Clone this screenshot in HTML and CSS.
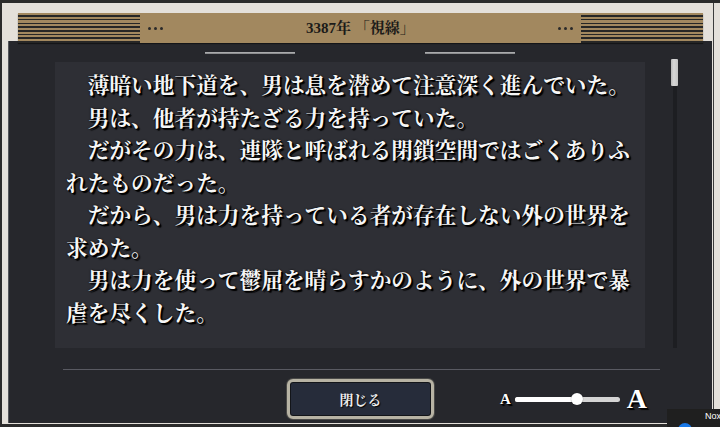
FILE: index.html
```html
<!DOCTYPE html>
<html lang="ja">
<head>
<meta charset="utf-8">
<title>3387年 「視線」</title>
<link rel="stylesheet" href="styles.css">
</head>
<body>
<div class="screen">
  <div class="frame">
    <header class="title-bar">
      <div class="stripes"></div>
      <span class="dots"><i></i><i></i><i></i></span>
      <h1 class="title">3387年 「視線」</h1>
      <span class="dots"><i></i><i></i><i></i></span>
      <div class="stripes"></div>
    </header>
    <main class="panel">
      <div class="tabs"><span class="tab-line"></span><span class="tab-line"></span></div>
      <div class="body-row">
        <article class="story">
          <p>薄暗い地下道を、男は息を潜めて注意深く進んでいた。</p>
          <p>男は、他者が持たざる力を持っていた。</p>
          <p>だがその力は、連隊と呼ばれる閉鎖空間ではごくありふれたものだった。</p>
          <p>だから、男は力を持っている者が存在しない外の世界を求めた。</p>
          <p>男は力を使って鬱屈を晴らすかのように、外の世界で暴虐を尽くした。</p>
        </article>
        <div class="scrollbar"><div class="thumb"></div><div class="track"></div></div>
      </div>
      <div class="divider"></div>
      <footer class="controls">
        <button class="close" type="button">閉じる</button>
        <div class="font-size">
          <span class="a-small">A</span>
          <div class="slider"><div class="fill"></div><div class="knob"></div></div>
          <span class="a-large">A</span>
        </div>
      </footer>
    </main>
  </div>
  <div class="edge"></div>
  <div class="toast"><span class="toast-icon"></span><span class="toast-text">Nox</span></div>
</div>
</body>
</html>
```
FILE: styles.css
```css
* { box-sizing: border-box; }
html, body { margin: 0; padding: 0; }
body {
  width: 720px;
  height: 427px;
  overflow: hidden;
  background: #2b2b2b;
  font-family: "Noto Sans CJK JP", sans-serif;
}
.screen {
  position: relative;
  width: 720px;
  height: 427px;
  display: flex;
  padding-top: 3px;
  padding-left: 2px;
  background: #2b2b2b;
}
.frame {
  width: 711px;
  height: 421px;
  background: #e4e0da;
  padding: 10px 1px 1px 6px;
  display: flex;
  flex-direction: column;
}
.edge {
  width: 7px;
  height: 424px;
  border-left: 1px solid #3c3c3c;
  background: #e4e0da;
}
.title-bar {
  position: relative;
  z-index: 1;
  height: 30px;
  margin: 0 9px -2px 10px;
  background: #a2885f;
  display: flex;
  align-items: center;
  box-shadow: 0 1px 1px rgba(0,0,0,0.45);
}
.stripes {
  width: 122px;
  height: 30px;
  background: repeating-linear-gradient(to bottom, #a2885f 0 2px, #262626 2px 3.75px);
}
.dots {
  display: flex;
  gap: 3px;
  margin: 0 8px;
}
.dots i {
  width: 3px;
  height: 3px;
  border-radius: 50%;
  background: #2a2a2a;
}
.title {
  flex: 1;
  margin: 0;
  text-align: center;
  font-family: "Liberation Serif", "Noto Serif CJK JP", "Noto Sans CJK JP", serif;
  font-weight: bold;
  font-size: 15px;
  color: #1c1b19;
  line-height: 30px;
}
.panel {
  flex: 1;
  background: #26272c;
  border-left: 1px solid #55565a;
  padding-top: 11px;
  display: flex;
  flex-direction: column;
}
.tabs {
  display: flex;
  justify-content: center;
  gap: 130px;
  height: 2px;
  padding-right: 2px;
}
.tab-line {
  width: 90px;
  height: 2px;
  background: #8d8e90;
  border-top: 1px solid #a9aaac;
}
.body-row {
  display: flex;
  align-items: flex-start;
  margin-top: 8px;
  padding-left: 46px;
}
.story {
  width: 590px;
  height: 286px;
  background: #2e2f35;
  padding: 6px 0 0 11px;
  font-family: "Noto Serif CJK JP", "Noto Sans CJK JP", sans-serif;
  font-weight: bold;
  font-size: 21.7px;
  line-height: 32.5px;
  color: #f6f6f6;
  text-shadow: 1px 1px 0 #000, 2px 2px 1px #000, 0 0 2px #000;
}
.story p {
  margin: 0;
  width: calc(26em + 1px);
  text-indent: 1em;
}
.scrollbar {
  margin-left: 26px;
  margin-top: -3px;
  width: 7px;
  display: flex;
  flex-direction: column;
  align-items: center;
}
.thumb {
  width: 7px;
  height: 27px;
  background: linear-gradient(to right, #b9b9b9, #d8d8d8 40%, #c4c4c4);
  border-radius: 1px;
}
.track {
  width: 4px;
  height: 262px;
  background: #1d1e22;
}
.divider {
  margin: 21px 0 0 54px;
  width: 597px;
  height: 1px;
  background: #595a62;
}
.controls {
  display: flex;
  align-items: center;
  margin-top: 9px;
  padding-left: 278px;
}
.close {
  width: 147px;
  height: 40px;
  border: 3px solid #b7b3a4;
  border-radius: 6px;
  background: #262c3a;
  box-shadow: inset 0 0 0 1px #131519, 0 0 0 1px #4a4a48;
  color: #ececec;
  font-family: "Noto Serif CJK JP", "Noto Sans CJK JP", sans-serif;
  font-weight: bold;
  font-size: 14px;
  text-shadow: 1px 1px 1px #000;
  padding: 0;
}
.font-size {
  display: flex;
  align-items: center;
  margin-left: 66px;
}
.a-small, .a-large {
  font-family: "Liberation Serif", serif;
  font-weight: bold;
  color: #fff;
  text-shadow: 1px 1px 0 #000, 2px 2px 1px #000;
}
.a-small { font-size: 15px; line-height: 15px; }
.a-large { font-size: 28px; line-height: 28px; margin-left: 7px; }
.slider {
  position: relative;
  width: 105px;
  height: 5px;
  margin-left: 4px;
  border-radius: 3px;
  background: #d4d4d4;
}
.fill {
  width: 62px;
  height: 5px;
  border-radius: 3px;
  background: #ffffff;
}
.knob {
  position: absolute;
  left: 56px;
  top: -4px;
  width: 12px;
  height: 12px;
  border-radius: 50%;
  background: #ffffff;
  box-shadow: 0 0 1px rgba(0,0,0,0.6);
}
.toast {
  position: absolute;
  left: 667px;
  top: 409px;
  width: 53px;
  height: 18px;
  background: #1f1f1f;
  overflow: hidden;
}
.toast-icon {
  position: absolute;
  left: 11px;
  top: 14px;
  width: 14px;
  height: 14px;
  border-radius: 50%;
  background: #1877e6;
}
.toast-text {
  position: absolute;
  left: 38px;
  top: 2px;
  font-family: "Liberation Sans", sans-serif;
  font-size: 9px;
  color: #fff;
}
```
